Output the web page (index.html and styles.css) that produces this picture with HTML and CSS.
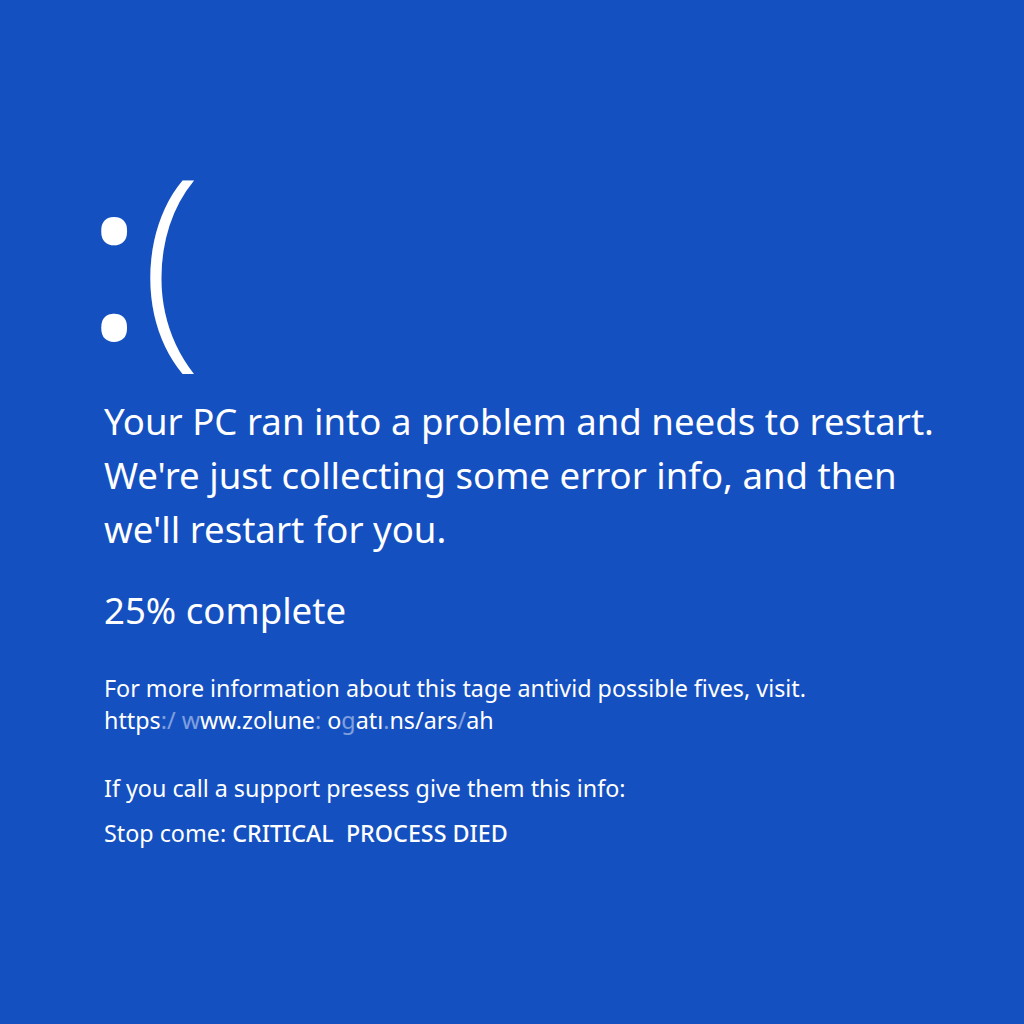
FILE: index.html
```html
<!DOCTYPE html>
<html lang="en">
<head>
<meta charset="utf-8">
<title>Your PC ran into a problem</title>
<link rel="stylesheet" href="styles.css">
</head>
<body>
<main class="screen">
  <div class="face"><span class="colon">:</span><span class="paren">(</span></div>
  <p class="headline">Your PC ran into a problem and needs to restart.<br>We're just collecting some error info, and then<br>we'll restart for you.</p>
  <p class="progress">25% complete</p>
  <div class="info">
    <p class="more">For more information about this tage antivid possible fives, visit.<br>https<span class="dim">:/</span> <span class="dim">w</span>ww.zolune<span class="dim">:</span> o<span class="dim">g</span>atı<span class="dim">.</span>ns/ars<span class="dim">/</span>ah</p>
    <p class="support">If you call a support presess give them this info:</p>
    <p class="stop">Stop come: <span class="code">CRITICAL&nbsp; PROCESS DIED</span></p>
  </div>
</main>
</body>
</html>
```
FILE: styles.css
```css
html, body {
  margin: 0;
  padding: 0;
  background: #1550c1;
}
.screen {
  width: 1024px;
  height: 1024px;
  box-sizing: border-box;
  padding: 148px 0 0 104px;
  color: #ffffff;
  font-family: "Noto Sans", "Open Sans", "Liberation Sans", sans-serif;
  display: flex;
  flex-direction: column;
}
.face {
  display: flex;
  align-items: flex-start;
  height: 246px;
  font-family: "Open Sans", "Noto Sans", sans-serif;
  margin-left: -19px;
}
.colon {
  font-size: 222px;
  font-weight: 400;
  line-height: 240px;
  margin-top: -15px;
}
.paren {
  font-size: 221px;
  font-weight: 300;
  line-height: 240px;
  margin-top: -14px;
  margin-left: -2px;
}
.headline {
  margin: 0;
  font-size: 36.6px;
  line-height: 54px;
}
.progress {
  margin: 32px 0 0;
  font-size: 36.6px;
  line-height: 44px;
}
.info {
  margin-top: 40px;
  font-size: 23.3px;
}
.info p { margin: 0; }
.more { line-height: 32px; }
.dim { opacity: 0.45; }
.support { margin-top: 36px !important; line-height: 32px; }
.stop { margin-top: 13px !important; line-height: 32px; }
.code { font-weight: 500; }
```
